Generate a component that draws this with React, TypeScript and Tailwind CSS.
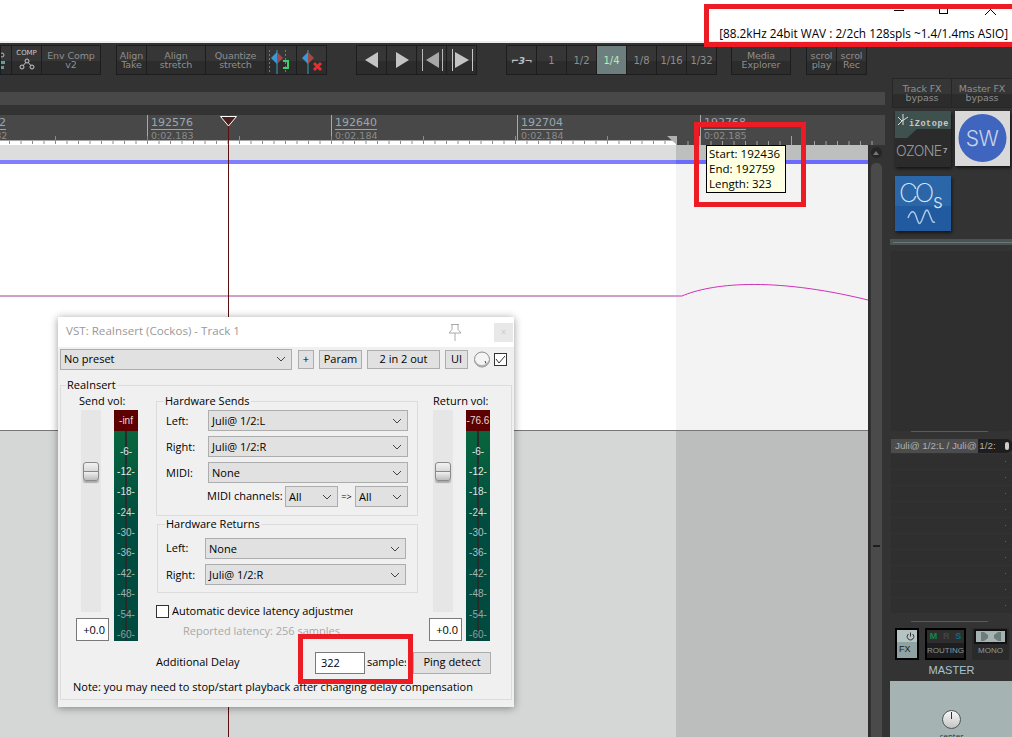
const ui = "[font-family:'Open_Sans',sans-serif]";
const tb = "[font-family:'DejaVu_Sans',sans-serif]";

const ToolBtn = ({ className, children }: { className: string; children?: React.ReactNode }) => (
  <div
    className={`h-[28px] flex flex-col items-center justify-center text-[9.5px] tracking-[-0.1px] leading-[9px] text-[#8e8e8e] bg-[linear-gradient(#363636_52%,#2c2c2c_52%)] overflow-hidden ${className}`}
  >
    {children}
  </div>
);

const Group = ({ className, children }: { className?: string; children: React.ReactNode }) => (
  <div className={`flex gap-[1px] p-[1px] h-[30px] bg-[#1d1d1d] ${className ?? ""}`}>{children}</div>
);

const Chevron = () => (
  <svg width="10" height="6" viewBox="0 0 10 6" className="shrink-0">
    <path d="M1 1l4 4 4-4" fill="none" stroke="#444" strokeWidth="1" />
  </svg>
);

const Select = ({ className, label }: { className: string; label: string }) => (
  <div className={`h-[21px] flex items-center justify-between pl-[3px] pr-[5px] bg-[#e1e1e1] border border-[#adadad] text-[11px] text-black ${className}`}>
    <span className="pt-[1px]">{label}</span>
    <Chevron />
  </div>
);

const Btn = ({ className, children }: { className: string; children: React.ReactNode }) => (
  <div className={`h-[19px] flex items-center justify-center bg-[#e1e1e1] border border-[#adadad] text-[11px] text-black ${className}`}>
    {children}
  </div>
);

const marks = [
  ["-6-", "text-[#dfeee8]"],
  ["-12-", "text-[#dfeee8]"],
  ["-18-", "text-[#d5e6e0]"],
  ["-24-", "text-[#c8dcd6]"],
  ["-30-", "text-[#a9c4bc]"],
  ["-36-", "text-[#a9c4bc]"],
  ["-42-", "text-[#a0bab2]"],
  ["-48-", "text-[#98b0a8]"],
  ["-54-", "text-[#90a8a0]"],
  ["-60-", "text-[#88a096]"],
];

const Meter = ({ top }: { top: string }) => (
  <div className="w-[24px] h-[231px] flex flex-col text-center [font-family:'Liberation_Sans',sans-serif] text-[10px]">
    <div className="h-[21px] shrink-0 bg-[#5c0000] text-[#e8d8d8] flex items-center justify-center">{top}</div>
    <div className="relative flex-1 min-h-0 overflow-hidden pt-[10.500px] bg-[linear-gradient(#08663e,#004c40_45%,#004a40)]">
      <div className="absolute left-[11px] top-0 bottom-0 w-[2px] bg-[#2b2b2b]" />
      {marks.map(([t, c]) => (
        <div key={t} className={`relative h-[20.4px] leading-[20.4px] ${c}`}>
          {t}
        </div>
      ))}
    </div>
  </div>
);

const Fader = ({ trackClass }: { trackClass: string }) => (
  <div className="w-[33px] flex flex-col">
    <div className={`w-[20px] h-[202px] bg-[#e6e6e6] pt-[52px] flex justify-center ${trackClass}`}>
      <div className="w-[16px] h-[19px] rounded-[3px] border border-[#8a8a8a] bg-[linear-gradient(#f2f2f2,#d8d8d8_48%,#888_50%,#f0f0f0_53%,#bdbdbd)] shadow-[0_2px_1px_rgba(0,0,0,0.25)]" />
    </div>
    <div className="mt-[6px] w-[33px] h-[23px] bg-white border border-[#7a7a7a] text-[11px] text-right pr-[3px] leading-[21px]">+0.0</div>
  </div>
);

const rulerMarks = [
  { x: "w-[184px]", n: "192576", t: "0:02.183" },
  { x: "w-[186px]", n: "192640", t: "0:02.184" },
  { x: "w-[183px]", n: "192704", t: "0:02.184" },
  { x: "flex-1", n: "192768", t: "0:02.185" },
];

const ticks = Array.from({ length: 76 }, (_, i) => 9.5 + i * 11.5);

export default function App() {
  return (
    <div className={`relative w-[1012px] h-[737px] overflow-hidden bg-white ${ui}`}>
      {/* title bar */}
      <div className="h-[41px] relative flex flex-col items-end">
        <div className="flex h-[16px] items-start pt-[9px] pr-[16px]">
          <div className="w-[10px] h-[1px] bg-black mt-[1px]" />
          <div className="ml-[35px] w-[9px] h-[5px] border border-black border-t-0" />
          <svg width="11" height="6" viewBox="0 0 11 6" className="ml-[37px]">
            <path d="M0 6L6 0M11 6L5 0" stroke="#000" fill="none" />
          </svg>
        </div>
        <div className="pr-[4px] mt-[9px] text-[11.8px] leading-[16px] text-black whitespace-nowrap">
          [88.2kHz 24bit WAV : 2/2ch 128spls ~1.4/1.4ms ASIO]
        </div>
      </div>
      <div className="h-[2px] bg-[#eeeeee]" />

      <div className="flex h-[694px]">
        {/* main column */}
        <div className="w-[885px] flex flex-col">
          {/* toolbar */}
          <div className={`h-[49px] shrink-0 bg-[#333333] pt-[2px] flex items-start ${tb}`}>
            <Group>
              <ToolBtn className="w-[10px] items-start">
                <svg width="10" height="20" viewBox="0 0 10 20">
                  <circle cx="1" cy="5" r="2" fill="none" stroke="#bbb" />
                  <path d="M0 11h4v3H0zM0 16h3v3H0z" fill="#5f9c9c" />
                </svg>
              </ToolBtn>
              <ToolBtn className="w-[29px] text-[#c8c8c8]">
                <span className="text-[7px] leading-[8px] -mt-[1px]">COMP</span>
                <svg width="16" height="12" viewBox="0 0 16 12" className="mt-[1px]">
                  <path d="M3 9L8 3l5 6" fill="none" stroke="#c8c8c8" />
                  <circle cx="3" cy="9" r="2" fill="#333" stroke="#c8c8c8" />
                  <circle cx="8" cy="3" r="2" fill="#333" stroke="#c8c8c8" />
                  <circle cx="13" cy="9" r="2" fill="#333" stroke="#c8c8c8" />
                </svg>
              </ToolBtn>
              <ToolBtn className="w-[58px]">
                <span>Env Comp</span>
                <span>v2</span>
              </ToolBtn>
            </Group>
            <Group className="ml-[15px]">
              <ToolBtn className="w-[29px]">
                <span>Align</span>
                <span>Take</span>
              </ToolBtn>
              <ToolBtn className="w-[58px]">
                <span>Align</span>
                <span>stretch</span>
              </ToolBtn>
              <ToolBtn className="w-[59px]">
                <span>Quantize</span>
                <span>stretch</span>
              </ToolBtn>
              <ToolBtn className="w-[30px]">
                <svg width="30" height="28" viewBox="0 0 30 28">
                  <path d="M11 4v24" stroke="#3aa0b8" />
                  <path d="M11 6l-6 6 6 6z" fill="#3a98d8" />
                  <path d="M11 6l6 6-6 6z" fill="#a04a48" />
                  <path d="M3.500 4v22M19.500 4v22" stroke="#777" strokeDasharray="2 2" />
                  <path d="M17 15h5v7h-5" fill="none" stroke="#3ecf6c" strokeWidth="2" />
                </svg>
              </ToolBtn>
              <ToolBtn className="w-[29px]">
                <svg width="29" height="28" viewBox="0 0 29 28">
                  <path d="M11 4v24" stroke="#3aa0b8" />
                  <path d="M11 6l-6 6 6 6z" fill="#3a98d8" />
                  <path d="M11 6l6 6-6 6z" fill="#a04a48" />
                  <path d="M17 17l7 7M24 17l-7 7" stroke="#e03030" strokeWidth="3" />
                </svg>
              </ToolBtn>
            </Group>
            <Group className="ml-[29px]">
              <ToolBtn className="w-[29px]">
                <svg width="16" height="18" viewBox="0 0 16 18"><path d="M14 1v16L1 9z" fill="#c4c4c4" /></svg>
              </ToolBtn>
              <ToolBtn className="w-[29px]">
                <svg width="16" height="18" viewBox="0 0 16 18"><path d="M2 1v16l13-8z" fill="#c4c4c4" /></svg>
              </ToolBtn>
              <ToolBtn className="w-[29px]">
                <svg width="24" height="24" viewBox="0 0 24 24"><path d="M19 4v16L6 12z" fill="#a8a8a8" /><path d="M2.500 1v22M22.500 1v22" stroke="#b8b8b8" /></svg>
              </ToolBtn>
              <ToolBtn className="w-[29px]">
                <svg width="24" height="24" viewBox="0 0 24 24"><path d="M5 4v16l14-8z" fill="#c4c4c4" /><path d="M2.500 1v22M22.500 1v22" stroke="#c8c8c8" /></svg>
              </ToolBtn>
            </Group>
            <Group className="ml-[29px]">
              <ToolBtn className="w-[29px] text-[#c0c0c0]"><span className="font-bold italic tracking-[-0.5px]">⌐3¬</span></ToolBtn>
              <ToolBtn className="w-[29px] text-[10px]">1</ToolBtn>
              <ToolBtn className="w-[29px] text-[10px]">1/2</ToolBtn>
              <div className="w-[29px] h-[28px] flex items-center justify-center text-[10px] text-[#b6eeb6] bg-[#6c7f7e]">1/4</div>
              <ToolBtn className="w-[29px] text-[10px]">1/8</ToolBtn>
              <ToolBtn className="w-[29px] text-[10px]">1/16</ToolBtn>
              <ToolBtn className="w-[29px] text-[10px]">1/32</ToolBtn>
            </Group>
            <Group className="ml-[14px]">
              <ToolBtn className="w-[58px]">
                <span>Media</span>
                <span>Explorer</span>
              </ToolBtn>
            </Group>
            <Group className="ml-[15px]">
              <ToolBtn className="w-[29px]">
                <span>scrol</span>
                <span>play</span>
              </ToolBtn>
              <ToolBtn className="w-[29px]">
                <span>scrol</span>
                <span>Rec</span>
              </ToolBtn>
            </Group>
          </div>
          <div className="h-[13px] shrink-0 bg-[#484848]" />
          <div className="h-[10px] shrink-0 bg-[#333333]" />

          {/* ruler */}
          <div className={`relative h-[30px] shrink-0 bg-[#484848] flex overflow-hidden ${tb}`}>
            <div className="w-[147px] h-full shrink-0">
              <div className="-ml-[8px]">
                <div className="text-[11px] leading-[12px] pt-[2px] w-fit border-b border-[#a0a0a0] text-[#9aa6b2]">12</div>
                <div className="text-[9.5px] leading-[11px] text-[#8b8b8b]">:82</div>
              </div>
            </div>
            {rulerMarks.map((m) => (
              <div key={m.n} className={`${m.x} h-full pl-[3px] shrink-0 border-l border-[#a8a8a8]`}>
                <div className="text-[11px] leading-[12px] pt-[2px] w-fit border-b border-[#a0a0a0] text-[#9aa6b2]">{m.n}</div>
                <div className="text-[9.5px] leading-[11px] text-[#8b8b8b]">{m.t}</div>
              </div>
            ))}
            <svg className="absolute left-0 bottom-0" width="885" height="9" viewBox="0 0 885 9">
              <path d="M0 9V5h676v4z" fill="#fff" />
              <path d="M0 4.500h676" stroke="#a8a8a8" />
              {ticks.map((x, i) => (
                <path key={i} d={`M${x} ${i % 8 === 4 ? 0 : 5}V${x < 676 ? 8 : 9}`} stroke={x < 676 ? "#8a8a8a" : "#a0a0a0"} />
              ))}
              <path d="M666 -1h11v10z" fill="#b0b0b0" />
            </svg>
          </div>

          {/* arrange + scrollbar */}
          <div className="flex flex-1 relative">
            <div className="w-[868px] flex flex-col">
              <div className="flex h-[15px] shrink-0">
                <div className="flex-1 bg-[#dcdddc]" />
                <div className="w-[192px] bg-[#bdbfbe]" />
              </div>
              <div className="flex h-[4px] shrink-0">
                <div className="flex-1 bg-[#8080ff]" />
                <div className="w-[192px] bg-[#6a6aff]" />
              </div>
              <div className="relative flex h-[266px] shrink-0">
                <div className="flex-1 bg-white" />
                <div className="w-[192px] bg-[#f3f3f3]" />
                <svg className="absolute left-0 top-[110px]" width="868" height="30" viewBox="0 0 868 30">
                  <path d="M0 22H676" stroke="#a0409a" fill="none" />
                  <path d="M676 22H682C710 10 770 2 868 26" stroke="#d030b8" fill="none" />
                </svg>
              </div>
              <div className="flex flex-1 border-t border-[#777777]">
                <div className="flex-1 bg-[#d5d7d6]" />
                <div className="w-[192px] bg-[#bcbebd]" />
              </div>
            </div>
            <div className="w-[17px] flex">
              <div className="w-[2px] bg-[#2e2e2e]" />
              <div className="w-[12px] bg-[#333333] flex flex-col items-center">
                <div className="mt-[2px] w-[11px] h-[11px] rounded-full bg-[#262626] flex items-center justify-center">
                  <div className="w-0 h-0 border-x-[3px] border-x-transparent border-b-[4px] border-b-[#777]" />
                </div>
                <div className="mt-[5px] w-[11px] flex-1 rounded-t-[5px] bg-[#4a4a4a] pt-[382px] flex justify-center">
                  <div className="w-[7px] h-[2px] bg-[#1d1d1d]" />
                </div>
              </div>
              <div className="flex-1 bg-[#333333]" />
            </div>
          </div>
        </div>

        {/* right panel */}
        <div className="flex-1 bg-[#333333] flex flex-col pt-[35px]">
          <div className={`ml-[7px] flex shrink-0 gap-[1px] p-[1px] h-[30px] bg-[#262626] ${tb}`}>
            <ToolBtn className="w-[58px]">
              <span>Track FX</span>
              <span>bypass</span>
            </ToolBtn>
            <ToolBtn className="w-[60px]">
              <span>Master FX</span>
              <span>bypass</span>
            </ToolBtn>
          </div>
          <div className="ml-[10px] mt-[3px] flex shrink-0 gap-[4px]">
            <svg width="56" height="56" viewBox="0 0 56 56" className="shadow-[1px_2px_3px_rgba(0,0,0,0.6)]">
              <rect width="56" height="56" fill="#2b2b2b" />
              <path d="M0 0h56v18H22L12 27H0z" fill="#3f514f" />
              <path d="M3 6l4 4 6-4M8 3v11M7 10l-4 4" stroke="#ddd" fill="none" />
              <text x="14" y="15" fontSize="8.5" fontWeight="700" letterSpacing="0.6" fill="#c8c8c8" fontFamily="Liberation Mono, monospace">iZotope</text>
              <text x="1" y="45" fontSize="14" fontWeight="300" letterSpacing="-0.6" fill="#9a9a9a" fontFamily="Inter, sans-serif">OZONE</text>
              <text x="48" y="42" fontSize="8" fontWeight="700" fill="#aaa" fontFamily="Liberation Sans, sans-serif">7</text>
            </svg>
            <svg width="55" height="55" viewBox="0 0 55 55" className="shadow-[1px_2px_3px_rgba(0,0,0,0.6)]">
              <rect width="55" height="55" fill="#d9d9d9" />
              <circle cx="27.5" cy="27" r="24" fill="#3f65bf" />
              <text x="27" y="35" textAnchor="middle" fontSize="21" fontWeight="300" letterSpacing="-0.5" fill="#c8d4ea" fontFamily="Inter, sans-serif">SW</text>
            </svg>
          </div>
          <svg width="56" height="55" viewBox="0 0 56 55" className="ml-[10px] mt-[9px] shrink-0 shadow-[1px_2px_3px_rgba(0,0,0,0.6)]">
            <rect width="56" height="55" fill="#215a9e" />
            <rect width="56" height="30" fill="#2a66a8" />
            <text x="4" y="26" fontSize="26" fontWeight="200" letterSpacing="-3" fill="#d5e4f2" fontFamily="Inter, sans-serif">CO</text>
            <text x="38" y="32" fontSize="19" fontWeight="300" fill="#d5e4f2" fontFamily="Inter, sans-serif">s</text>
            <path d="M13 42c3-8 6-8 8-2s3 11 6 4 4-14 7-7 3 10 6 9" stroke="#a8c8e4" strokeWidth="1.5" fill="none" />
          </svg>

          <div className="mt-[8px] ml-[5px] h-[6px] shrink-0 bg-[#4a5553] flex items-center">
            <div className="w-full h-[1px] bg-[#6b7674] ml-[3px]" />
          </div>
          <div className="ml-[6px] mt-[6px] h-[180px] shrink-0 bg-[#2f2f2f]" />
          <div className="mx-auto w-[77px] h-[1px] shrink-0 bg-[#5a5a5a]" />
          <div className="ml-[6px] mt-[7px] h-[14px] shrink-0 relative flex items-center bg-[#1e1e1e] rounded-r-[7px] [font-family:'Liberation_Sans',sans-serif] text-[9.8px] text-[#b0b0b0] overflow-hidden">
            <div className="absolute left-0 top-0 w-[87px] h-full bg-[#4c4c4c]" />
            <span className="relative ml-[4px] whitespace-nowrap w-[100px]">Juli@ 1/2:L / Juli@ 1/2:</span>
            <span className="relative ml-[10px] w-[4px] h-[8px] rounded-full bg-[#ccc]" />
          </div>
          <div className="ml-[6px] mt-[1px] shrink-0 flex flex-col">
            {Array.from({ length: 10 }, (_, i) => (
              <div key={i} className="h-[16px] bg-[#2f2f2f] border-b border-[#333333] flex items-center justify-end pr-[7px]">
                <div className="w-[1px] h-[1px] bg-[#666]" />
              </div>
            ))}
          </div>
          <div className="mx-auto w-[77px] h-[1px] shrink-0 bg-[#5a5a5a] mt-[7px]" />
          <div className="flex mt-[6px] ml-[10px] shrink-0 [font-family:'Liberation_Sans',sans-serif]">
            <div className="w-[24px] h-[32px] border-2 border-black flex flex-col text-[9px] text-[#222]">
              <div className="h-[12px] bg-[#b6c3c3] flex justify-end items-center pr-[2px]">
                <svg width="9" height="9" viewBox="0 0 9 9"><path d="M2.500 2a3.300 3.300 0 1 0 4 0M4.500 0.500v4" fill="none" stroke="#333" /></svg>
              </div>
              <div className="flex-1 bg-[#8fa3a3] flex items-center pl-[2px]">FX</div>
            </div>
            <div className="ml-[6px] w-[41px] h-[32px] border-2 border-black bg-[#1e1e1e] flex flex-col items-center text-[8px] text-[#8e9a9a]">
              <div className="h-[13px] w-full bg-[#2e2e2e] flex justify-around items-center font-bold text-[9px]">
                <span className="text-[#0d8a4a]">M</span>
                <span className="text-[#444]">R</span>
                <span className="text-[#0d6a8a]">S</span>
              </div>
              <div className="leading-[15px]">ROUTING</div>
            </div>
            <div className="ml-[6px] w-[37px] h-[32px] bg-[#2a2a2a] flex flex-col items-center text-[8px] text-[#8e9a9a]">
              <div className="mt-[1px] w-[33px] h-[15px] border-2 border-[#111] bg-[#a5b3b3] flex items-center justify-center">
                <svg width="20" height="9" viewBox="0 0 20 9"><path d="M0 0h3l4 3v3l-4 3H0zM20 0h-3l-4 3v3l4 3h3z" fill="#6f7c7c" /></svg>
              </div>
              <div className="leading-[14px]">MONO</div>
            </div>
          </div>
          <div className="ml-[5px] mt-[1px] mb-[2px] h-[18px] shrink-0 text-center leading-[18px] text-[11px] text-[#a8c4d0] [font-family:'Liberation_Sans',sans-serif]">MASTER</div>
          <div className="ml-[5px] flex-1 min-h-0 overflow-hidden bg-[#a5b3b3] flex flex-col items-center pt-[29px]">
            <div className="relative w-[19px] h-[19px] shrink-0 rounded-full border border-[#555] bg-[linear-gradient(#f8f8f8,#c4c4c4)] flex justify-center">
              <div className="w-[1px] h-[7px] bg-[#333] mt-[1px]" />
            </div>
            <div className="mt-[2px] text-[8px] leading-[10px] text-[#333]">center</div>
          </div>
        </div>
      </div>

      {/* playhead */}
      <div className="absolute left-[228px] top-[115px] bottom-0 w-[1px] bg-[#5a1010]" />
      <svg className="absolute left-[220px] top-[116px]" width="17" height="11" viewBox="0 0 17 11">
        <path d="M.5.5h16L8.500 10z" fill="#4a2020" stroke="#fff" />
      </svg>

      {/* tooltip */}
      <div className="absolute left-[706px] top-[145px] w-[80px] h-[48px] bg-[#ffffe1] border border-black pl-[2px] text-[11.5px] leading-[15px] text-black">
        <div>Start: 192436</div>
        <div>End: 192759</div>
        <div>Length: 323</div>
      </div>

      {/* ReaInsert window */}
      <div className="absolute left-[58px] top-[317px] w-[456px] h-[390px] bg-[#f0f0f0] shadow-[0_1px_8px_rgba(0,0,0,0.4)] text-[11px] text-black">
        <div className="h-[30px] bg-white flex items-center pl-[8px] pr-[1px] justify-between">
          <span className="text-[11.6px] text-[#999999] -mt-[3px]">VST: ReaInsert (Cockos) - Track 1</span>
          <div className="flex items-center gap-[31px]">
            <svg width="16" height="17" viewBox="0 0 16 17">
              <path d="M4 .5h8M5 .5v5L2 9h12l-3-3.500V.5M8 9v8" fill="#fff" stroke="#aaa" />
            </svg>
            <div className="w-[19px] h-[19px] bg-[#e8e8e8] text-[#ccc] text-center text-[10px] leading-[18px]">×</div>
          </div>
        </div>
        <div className="flex items-center pl-[2px] pt-[2px] h-[22px]">
          <Select className="w-[232px] h-[21px]" label="No preset" />
          <Btn className="ml-[6px] w-[16px]">+</Btn>
          <Btn className="ml-[5px] w-[43px]">Param</Btn>
          <Btn className="ml-[5px] w-[73px]">2 in 2 out</Btn>
          <Btn className="ml-[5px] w-[23px]">UI</Btn>
          <svg width="16" height="17" viewBox="0 0 16 17" className="ml-[6px]">
            <circle cx="8" cy="8.500" r="7.500" fill="#f4f4f4" stroke="#8a8a8a" />
            <path d="M1 10a7.500 7.500 0 0 0 14 0" fill="none" stroke="#b0b0b0" strokeWidth="1.500" />
            <path d="M11 10l1 2.500" stroke="#444" />
          </svg>
          <div className="ml-[4px] w-[13px] h-[13px] bg-white border border-[#333] flex items-center justify-center">
            <svg width="11" height="9" viewBox="0 0 11 9"><path d="M1 4l3 4 6-7" fill="none" stroke="#333" /></svg>
          </div>
        </div>
        <fieldset className="mt-[8px] mx-[2px] h-[323px] border border-[#dcdcdc] min-w-0">
          <legend className="ml-[5px] px-[1px] leading-[16px] h-[16px]">ReaInsert</legend>
          <div className="flex h-[249px]">
            <div className="w-[95px] shrink-0">
              <div className="h-[17px] pl-[18px] leading-[16px]">Send vol:</div>
              <div className="flex ml-[15px] gap-[5px]">
                <Fader trackClass="ml-[5px]" />
                <Meter top="-inf" />
              </div>
            </div>
            <div className="w-[262px] shrink-0">
              <fieldset className="h-[123px] border border-[#dcdcdc] min-w-0">
                <legend className="ml-[7px] px-[1px] leading-[16px] h-[16px]">Hardware Sends</legend>
                <div className="pl-[9px] pt-[1px] flex flex-col gap-[5px]">
                  <div className="flex items-center justify-between pr-[9px]"><span className="pt-[2px]">Left:</span><Select className="w-[200px]" label="Juli@ 1/2:L" /></div>
                  <div className="flex items-center justify-between pr-[9px]"><span className="pt-[2px]">Right:</span><Select className="w-[200px]" label="Juli@ 1/2:R" /></div>
                  <div className="flex items-center justify-between pr-[9px]"><span className="pt-[2px]">MIDI:</span><Select className="w-[200px]" label="None" /></div>
                </div>
                <div className="flex items-center pl-[50px] mt-[3px]">
                  <span className="w-[78px] whitespace-nowrap">MIDI channels:</span>
                  <Select className="w-[53px]" label="All" />
                  <span className="w-[17px] text-center text-[9px]">=&gt;</span>
                  <Select className="w-[53px]" label="All" />
                </div>
              </fieldset>
              <fieldset className="ml-[1px] h-[77px] border border-[#dcdcdc] min-w-0">
                <legend className="ml-[7px] px-[1px] leading-[16px] h-[16px]">Hardware Returns</legend>
                <div className="pl-[8px] pr-[11px] flex flex-col gap-[5px] pt-[6px]">
                  <div className="flex items-center justify-between"><span>Left:</span><Select className="w-[201px]" label="None" /></div>
                  <div className="flex items-center justify-between"><span className="pt-[2px]">Right:</span><Select className="w-[201px]" label="Juli@ 1/2:R" /></div>
                </div>
              </fieldset>
              <div className="flex items-center mt-[11px] h-[14px]">
                <div className="w-[13px] h-[13px] bg-white border border-[#333] shrink-0" />
                <span className="ml-[3px] w-[181px] overflow-hidden whitespace-nowrap">Automatic device latency adjustment</span>
              </div>
              <div className="mt-[5px] ml-[27px] text-[#a8a8a8] leading-[15px]">Reported latency: 256 samples</div>
            </div>
            <div className="flex-1">
              <div className="h-[17px] pl-[15px] leading-[16px]">Return vol:</div>
              <div className="flex ml-[11px] gap-[4px]">
                <Fader trackClass="ml-[4px]" />
                <Meter top="-76.6" />
              </div>
            </div>
          </div>
          <div className="flex items-center h-[23px] mt-[9px] pl-[95px]">
            <span className="w-[159px]">Additional Delay</span>
            <div className="w-[50px] h-[22px] bg-white border border-[#7a7a7a] pl-[5px] leading-[20px]">322</div>
            <span className="ml-[2px] w-[39px] overflow-hidden whitespace-nowrap">samples</span>
            <div className="ml-[7px] w-[78px] h-[22px] flex items-center justify-center bg-[#e1e1e1] border border-[#adadad]">Ping detect</div>
          </div>
          <div className="ml-[12px] mt-[5px] leading-[16px]">Note: you may need to stop/start playback after changing delay compensation</div>
        </fieldset>
      </div>

      {/* annotation boxes */}
      <div className="absolute left-[704px] top-[4px] w-[320px] h-[43px] border-[5px] border-[#ed1c24]" />
      <div className="absolute left-[694px] top-[122px] w-[112px] h-[85px] border-[5px] border-[#ed1c24]" />
      <div className="absolute left-[298px] top-[634px] w-[115px] h-[50px] border-[5px] border-[#ed1c24]" />
    </div>
  );
}
